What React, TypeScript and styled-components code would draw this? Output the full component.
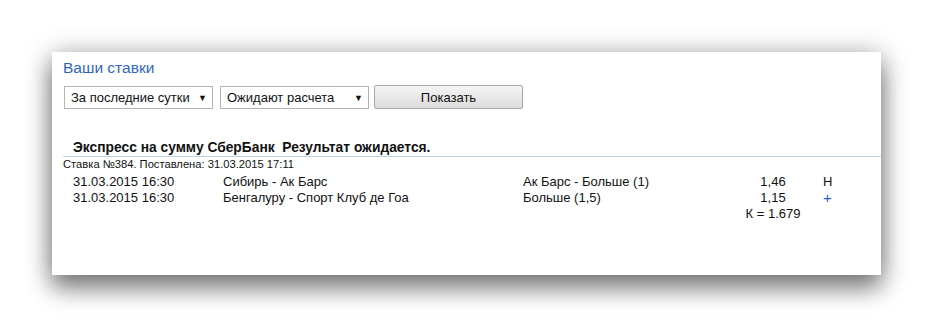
import React from 'react';
import styled, { createGlobalStyle } from 'styled-components';

const GlobalStyle = createGlobalStyle`
  html, body {
    margin: 0;
    background: #ffffff;
  }
  body {
    font-family: Tahoma, "Liberation Sans", Arial, sans-serif;
    color: #111;
  }
`;

const Page = styled.div`
  padding: 52px;
`;

const Panel = styled.div`
  width: 829px;
  height: 223px;
  box-sizing: border-box;
  background: #fff;
  padding: 6px 0 0 11px;
  box-shadow: 0 14px 22px rgba(0, 0, 0, 0.42), 0 2px 26px rgba(0, 0, 0, 0.3);
`;

const Title = styled.h2`
  margin: 0;
  font-size: 15.5px;
  line-height: 20px;
  font-weight: normal;
  color: #2f67bd;
`;

const Filters = styled.div`
  display: flex;
  gap: 7px;
  margin: 8px 0 0 1px;
`;

const Select = styled.div`
  width: 149px;
  height: 23px;
  box-sizing: border-box;
  border: 1px solid #b4b4b4;
  background: #fff;
  display: flex;
  align-items: center;
  justify-content: space-between;
  padding: 0 5px 0 6px;
  font-size: 13px;

  &::after {
    content: '▼';
    font-size: 9px;
    color: #111;
  }
`;

const Button = styled.button`
  width: 149px;
  height: 24px;
  margin: -1px 0 0 -2px;
  border: 1px solid #a8a8a8;
  border-radius: 2px;
  background: linear-gradient(#f4f4f4, #dcdcdc);
  font-family: inherit;
  font-size: 13px;
  color: #111;
`;

const Bet = styled.div`
  margin-top: 31px;
`;

const BetHeading = styled.div`
  font-weight: bold;
  font-size: 13.8px;
  line-height: 16px;
  padding-left: 10px;
  border-bottom: 1px solid #b3d4f0;
`;

const BetInfo = styled.div`
  font-size: 11.2px;
  line-height: 15px;
`;

const Rows = styled.div`
  display: grid;
  grid-template-columns: 150px 300px 200px 100px 40px;
  padding-left: 10px;
  font-size: 13px;
  line-height: 16px;
  margin-top: 2px;
`;

const Cell = styled.div<{ $center?: boolean; $blue?: boolean }>`
  text-align: ${(p) => (p.$center ? 'center' : 'left')};
  color: ${(p) => (p.$blue ? '#2a5db8' : '#111')};
  font-size: ${(p) => (p.$blue ? '15px' : 'inherit')};
  white-space: nowrap;
`;

const rows = [
  { date: '31.03.2015 16:30', match: 'Сибирь - Ак Барс', outcome: 'Ак Барс - Больше (1)', coef: '1,46', result: 'Н' },
  { date: '31.03.2015 16:30', match: 'Бенгалуру - Спорт Клуб де Гоа', outcome: 'Больше (1,5)', coef: '1,15', result: '+' },
];

export default function App() {
  return (
    <>
      <GlobalStyle />
      <Page>
        <Panel>
          <Title>Ваши ставки</Title>
          <Filters>
            <Select>За последние сутки</Select>
            <Select>Ожидают расчета</Select>
            <Button>Показать</Button>
          </Filters>
          <Bet>
            <BetHeading>Экспресс на сумму СберБанк&nbsp; Результат ожидается.</BetHeading>
            <BetInfo>Ставка №384. Поставлена: 31.03.2015 17:11</BetInfo>
            <Rows>
              {rows.map((r, i) => (
                <React.Fragment key={i}>
                  <Cell>{r.date}</Cell>
                  <Cell>{r.match}</Cell>
                  <Cell>{r.outcome}</Cell>
                  <Cell $center>{r.coef}</Cell>
                  <Cell $blue={r.result === '+'}>{r.result}</Cell>
                </React.Fragment>
              ))}
              <Cell />
              <Cell />
              <Cell />
              <Cell $center>К = 1.679</Cell>
              <Cell />
            </Rows>
          </Bet>
        </Panel>
      </Page>
    </>
  );
}
